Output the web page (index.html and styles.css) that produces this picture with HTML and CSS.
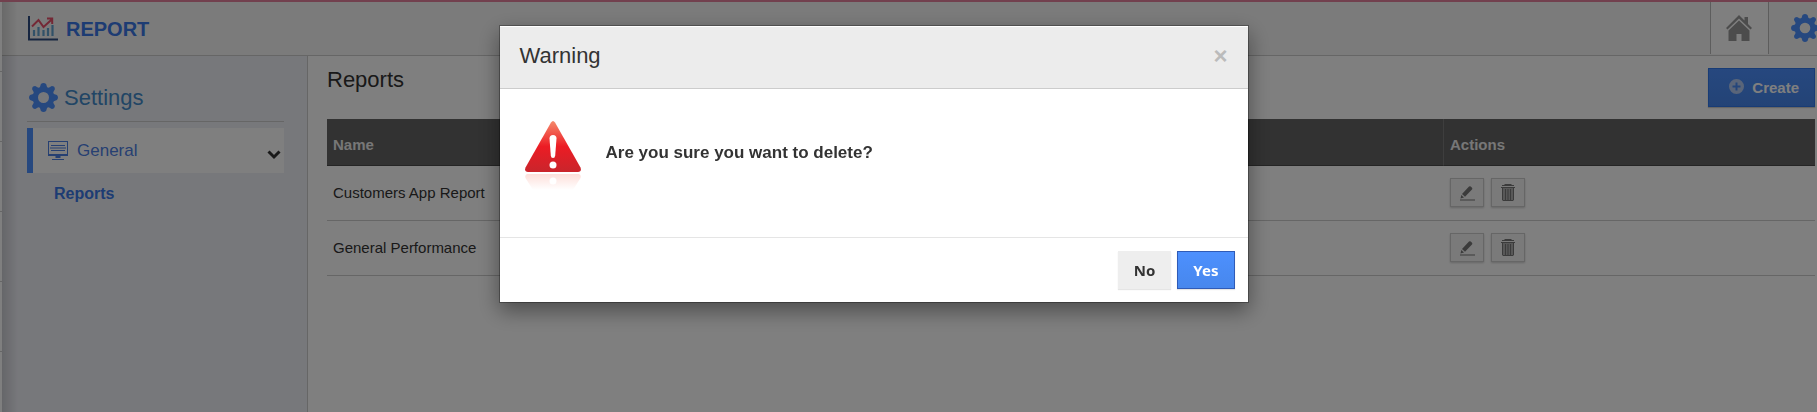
FILE: index.html
```html
<!DOCTYPE html>
<html lang="en">
<head>
  <meta charset="UTF-8">
  <meta name="viewport" content="width=device-width, initial-scale=1.0">
  <title>Report</title>
  <link rel="stylesheet" href="styles.css">
</head>
<body>
  <!-- shared icons -->
  <svg class="sprite" width="0" height="0" aria-hidden="true">
    <symbol id="icon-gear" viewBox="0 0 28 28">
      <path fill-rule="evenodd" d="M11.500 1q2.500-2 5 0l1 3 1.500.6 3-1.600q3 0 3 3l-1.600 3 .6 1.500 3 1q2 2.500 0 5l-3 1-.6 1.500 1.600 3q0 3-3 3l-3-1.600-1.500.6-1 3q-2.500 2-5 0l-1-3-1.500-.6-3 1.600q-3 0-3-3l1.600-3-.6-1.500-3-1q-2-2.500 0-5l3-1 .6-1.500-1.600-3q0-3 3-3l3 1.600 1.500-.6zM14 8.700a5.300 5.300 0 1 0 0 10.600 5.300 5.300 0 0 0 0-10.600z"/>
    </symbol>
    <symbol id="icon-edit" viewBox="0 0 16 16">
      <path d="M1 14.500h15v1H1zM1.500 13.500l.8-3.500 2.700 2.600zM3 9 10 1.600q.9-.9 1.800 0l1.200 1.200q.8.900 0 1.800L6 11.800z"/>
    </symbol>
    <symbol id="icon-trash" viewBox="0 0 14 17">
      <path d="M3.500 0h7v1H13v1H1V1h2.500zM0 3h14v1H0z"/>
      <path opacity=".55" d="M1 4h12v12q0 1-1 1H2q-1 0-1-1z"/>
      <path d="M1 4h1v12H1zM4 5h1v11H4zM6.500 5h1v11h-1zM9 5h1v11H9zM12 4h1v12h-1zM2 16h10v1H2z"/>
    </symbol>
  </svg>

  <div class="page">
    <ul class="rail">
      <li></li><li></li><li></li><li></li><li></li>
    </ul>

    <div class="main">
      <header class="topbar">
        <div class="brand">
          <svg width="30" height="25" viewBox="0 0 30 25" aria-hidden="true">
            <path d="M1 0v23.500h29" fill="none" stroke="#2c4a80" stroke-width="2"/>
            <path d="M6 14v6M10.500 11v9M15.500 14v6M20 12v8M24.500 9v11" stroke="#62a3d0" stroke-width="2.200"/>
            <path d="M4 10.500 10.500 4l5 7L24 3.200M19 2.500h5.200V8" fill="none" stroke="#e8506a" stroke-width="2"/>
          </svg>
          <span>REPORT</span>
        </div>
        <nav class="top-links">
          <a href="#" class="home" aria-label="Home">
            <svg width="26" height="26" viewBox="0 0 26 26">
              <path d="M13 0 0 13l1.500 1.500L13 3.500l11.500 11L26 13l-4-4V2h-3.500v3.500z"/>
              <path d="M13 5.500 2.500 15.500V26h8v-7h5v7h8V15.500z"/>
            </svg>
          </a>
          <a href="#" class="config" aria-label="Configuration">
            <svg width="28" height="28"><use href="#icon-gear"/></svg>
          </a>
        </nav>
      </header>

      <div class="columns">
        <aside class="sidebar">
          <h2 class="sidebar-title">
            <svg width="29" height="29"><use href="#icon-gear"/></svg>
            Settings
          </h2>
          <a href="#" class="menu-item">
            <svg width="20" height="20" viewBox="0 0 20 20" aria-hidden="true">
              <path fill-rule="evenodd" d="M0 0h20v15H0zM1 1v12h18V1z"/>
              <path d="M3 4h14v1H3zM2 6.500h16v1H2zM3 9h14v1H3zM7.500 15h5v2h-5zM4 18h12v1H4z"/>
            </svg>
            <span>General</span>
            <svg class="chevron" width="14" height="10" viewBox="0 0 14 10" aria-hidden="true">
              <path d="M1.500 1.500 7 7l5.500-5.500"/>
            </svg>
          </a>
          <a href="#" class="submenu-item">Reports</a>
        </aside>

        <main class="content">
          <div class="content-head">
            <h1>Reports</h1>
            <button type="button" class="btn btn-create">
              <svg width="15" height="15" viewBox="0 0 15 15" aria-hidden="true">
                <path fill-rule="evenodd" d="M7.500 0a7.500 7.500 0 1 0 0 15 7.500 7.500 0 0 0 0-15zM6.500 3.500h2v3h3v2h-3v3h-2v-3h-3v-2h3z"/>
              </svg>
              Create
            </button>
          </div>
          <table class="grid">
            <thead>
              <tr><th>Name</th><th class="actions">Actions</th></tr>
            </thead>
            <tbody>
              <tr>
                <td>Customers App Report</td>
                <td>
                  <div class="tools">
                    <button type="button" aria-label="Edit"><svg width="16" height="16"><use href="#icon-edit"/></svg></button>
                    <button type="button" aria-label="Delete"><svg width="14" height="17"><use href="#icon-trash"/></svg></button>
                  </div>
                </td>
              </tr>
              <tr>
                <td>General Performance</td>
                <td>
                  <div class="tools">
                    <button type="button" aria-label="Edit"><svg width="16" height="16"><use href="#icon-edit"/></svg></button>
                    <button type="button" aria-label="Delete"><svg width="14" height="17"><use href="#icon-trash"/></svg></button>
                  </div>
                </td>
              </tr>
            </tbody>
          </table>
        </main>
      </div>
    </div>
  </div>

  <div class="overlay">
    <div class="modal" role="dialog" aria-labelledby="modal-title">
      <div class="modal-header">
        <h3 id="modal-title">Warning</h3>
        <button type="button" class="close" aria-label="Close">×</button>
      </div>
      <div class="modal-body">
        <svg width="56" height="70" viewBox="0 0 56 70" aria-hidden="true">
          <defs>
            <linearGradient id="red" x1="0" y1="0" x2="0" y2="1">
              <stop offset="0" stop-color="#f58a6c"/>
              <stop offset=".5" stop-color="#ec1c24"/>
              <stop offset="1" stop-color="#c9252c"/>
            </linearGradient>
            <linearGradient id="fade" x1="0" y1="0" x2="0" y2="1">
              <stop offset="0" stop-color="#fddfda"/>
              <stop offset="1" stop-color="#fff"/>
            </linearGradient>
          </defs>
          <path fill="url(#red)" d="M26 1.500q2-3 4 0L55.500 46.500q1.500 4.500-2.500 4.500H3q-4 0-2.500-4.500z"/>
          <path fill="#fff" d="M24.500 17.500q0-3.500 3.500-3.500t3.500 3.500l-1.300 17q-.2 2.500-2.200 2.500t-2.200-2.500z"/>
          <circle cx="28" cy="44" r="3.500" fill="#fff"/>
          <path fill="url(#fade)" d="M2 53h52q2.500 1 1.500 4L48 69H8L.5 57q-1-3 1.500-4z"/>
          <circle cx="28" cy="60" r="3.500" fill="#fff"/>
        </svg>
        <p>Are you sure you want to delete?</p>
      </div>
      <div class="modal-footer">
        <button type="button" class="btn btn-no">No</button>
        <button type="button" class="btn btn-yes">Yes</button>
      </div>
    </div>
  </div>
</body>
</html>
```
FILE: styles.css
```css
* {
  box-sizing: border-box;
}

body {
  margin: 0;
  background: #fff;
  color: #333;
  font-family: "Liberation Sans", Arial, sans-serif;
  font-size: 15px;
  line-height: 20px;
}

h1, h2, h3, p, ul {
  margin: 0;
  padding: 0;
  font-weight: normal;
}

a {
  text-decoration: none;
}

svg {
  display: block;
  flex: none;
  fill: currentColor;
}

button {
  font-family: inherit;
  cursor: pointer;
}

.sprite {
  position: absolute;
}

.page {
  display: flex;
  height: 100vh;
  overflow: hidden;
  border-top: 2px solid #e4809c;
}

/* edge of the collapsed navigation */
.rail {
  position: relative;
  flex: none;
  width: 2px;
  list-style: none;
}

.rail li {
  height: 70px;
  border-bottom: 1px solid #ccc;
}

.rail::after {
  content: "";
  position: absolute;
  top: 0;
  bottom: 0;
  left: 2px;
  width: 16px;
  background: linear-gradient(to right, rgba(0,0,0,0.15), rgba(0,0,0,0));
}

.main {
  flex: 1;
  min-width: 0;
  display: flex;
  flex-direction: column;
}

/* top bar */
.topbar {
  display: flex;
  justify-content: space-between;
  height: 54px;
  background: #f7f7f7;
  border-bottom: 1px solid #ccc;
}

.brand {
  display: flex;
  align-items: center;
  gap: 8px;
  padding-left: 26px;
  color: #3b78e7;
  font-size: 20px;
  font-weight: bold;
}

.top-links {
  display: flex;
  height: 52px;
}

.home {
  width: 59px;
  padding: 13px 15px;
  background: #fff;
  border: solid #bbb;
  border-width: 0 1px;
  color: #999;
}

.config {
  width: 48px;
  padding: 12px 22px;
  color: #4d90fe;
}

.columns {
  flex: 1;
  display: flex;
}

/* sidebar */
.sidebar {
  flex: none;
  width: 306px;
  padding: 18px 23px 0 25px;
  background: #eff0f7;
  border-right: 1px solid #ccc;
}

.sidebar-title {
  display: flex;
  align-items: center;
  gap: 6px;
  height: 48px;
  margin-bottom: 6px;
  padding-left: 2px;
  border-bottom: 1px solid #ccc;
  color: #428bca;
  font-size: 22px;
}

.sidebar-title svg {
  color: #4d90fe;
}

.menu-item {
  display: flex;
  align-items: center;
  gap: 9px;
  height: 45px;
  padding: 0 3px 0 15px;
  background: #fff;
  border-left: 6px solid #4d90fe;
  color: #4d80e4;
  font-size: 17px;
}

.menu-item .chevron {
  margin: 8px 0 0 auto;
  fill: none;
  stroke: #333;
  stroke-width: 3;
}

.submenu-item {
  display: block;
  padding: 11px 27px;
  color: #3b78e7;
  font-size: 16px;
  font-weight: bold;
}

/* content */
.content {
  flex: 1;
  padding: 12px 2px 0 19px;
}

.content-head {
  display: flex;
  justify-content: space-between;
  height: 51px;
}

.content-head h1 {
  padding-top: 2px;
  font-size: 22px;
}

.btn {
  padding: 0 15px;
  border: 1px solid #eee;
  font-size: 15px;
  font-weight: bold;
  line-height: 20px;
}

.btn-create {
  display: flex;
  align-items: center;
  gap: 8px;
  height: 39px;
  padding-left: 20px;
  background: linear-gradient(#4d90fe, #4787ed);
  border-color: #3079ed;
  color: #fff;
  box-shadow: 0 1px 1px rgba(0,0,0,0.2);
}

.btn-create svg {
  margin-bottom: 2px;
  color: #b4cbf3;
}

.grid {
  width: 100%;
  table-layout: fixed;
  border-collapse: separate;
  border-spacing: 0;
}

.grid th {
  height: 47px;
  padding: 6px 6px 0;
  background: #646464;
  border-bottom: 1px solid #4a4a4a;
  color: #eee;
  text-align: left;
}

.grid .actions {
  width: 25%;
  border-left: 1px solid #7d7d7d;
}

.grid td {
  height: 55px;
  padding: 0 6px;
  border-bottom: 1px solid #ccc;
}

.tools {
  display: flex;
  gap: 7px;
  padding: 0 0 1px 1px;
}

.tools button {
  display: flex;
  align-items: center;
  justify-content: center;
  width: 34px;
  height: 29px;
  padding: 0;
  background: #f5f5f5;
  border: 1px solid #ccc;
  color: #777;
  box-shadow: 0 1px 2px rgba(0,0,0,0.2);
}

/* dialog */
.overlay {
  position: fixed;
  inset: 0;
  display: flex;
  align-items: flex-start;
  justify-content: center;
  padding: 25px 70px 0 0;
  background: rgba(0,0,0,0.5);
}

.modal {
  width: 750px;
  padding-top: 1px;
  background: #fff;
  background-clip: padding-box;
  border: 1px solid rgba(0,0,0,0.3);
  box-shadow: 0 8px 20px rgba(0,0,0,0.4);
}

.modal-header {
  display: flex;
  align-items: center;
  justify-content: space-between;
  height: 62px;
  padding: 0 20px 4px;
  background: #ececec;
  border-bottom: 1px solid #ccc;
}

.modal-header h3 {
  font-size: 22px;
}

.close {
  padding: 0;
  background: none;
  border: none;
  color: #bbb;
  font-size: 24px;
  font-weight: bold;
  line-height: 20px;
}

.modal-body {
  display: flex;
  gap: 25px;
  height: 148px;
  padding: 32px 25px;
}

.modal-body p {
  padding-top: 22px;
  font-size: 17px;
  font-weight: bold;
}

.modal-footer {
  display: flex;
  align-items: flex-start;
  justify-content: flex-end;
  gap: 6px;
  height: 65px;
  padding: 13px;
  border-top: 1px solid #e5e5e5;
}

.modal-footer .btn {
  height: 38px;
  font-family: "Noto Sans", sans-serif;
  box-shadow: 0 1px 1px rgba(0,0,0,0.1);
}

.btn-no {
  background: #eee;
  color: #333;
}

.btn-yes {
  background: linear-gradient(#4d90fe, #4787ed);
  border-color: #2f5bb7;
  color: #fff;
}
```
